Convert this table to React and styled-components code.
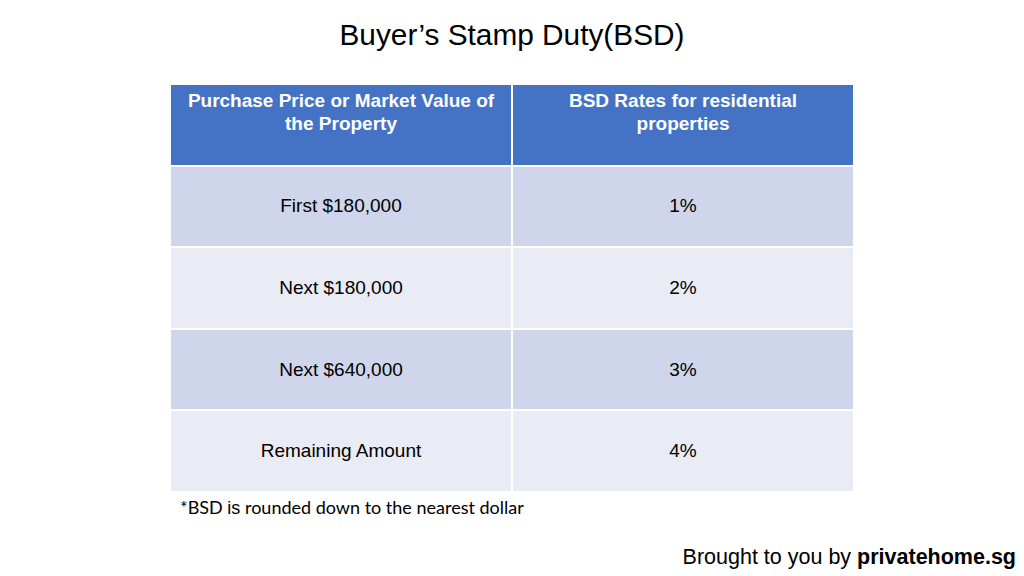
import React from "react";
import styled, { createGlobalStyle } from "styled-components";

const Global = createGlobalStyle`
  html, body { margin: 0; padding: 0; background: #ffffff; }
  body { font-family: "Liberation Sans", Arial, sans-serif; color: #000; }
`;

const Slide = styled.div`
  width: 1024px;
  height: 576px;
  display: flex;
  flex-direction: column;
  box-sizing: border-box;
  overflow: hidden;
`;

const Title = styled.h1`
  margin: 16px 0 0 0;
  font-size: 29.8px;
  line-height: 38px;
  font-weight: 400;
  text-align: center;
`;

const Table = styled.div`
  margin: 31px 0 0 171px;
  width: 682px;
  height: 406px;
  display: grid;
  grid-template-columns: 340px 340px;
  grid-template-rows: repeat(5, 1fr);
  column-gap: 2px;
  row-gap: 2px;
  background: #ffffff;
`;

const HeadCell = styled.div`
  background: #4472c4;
  color: #ffffff;
  font-weight: 700;
  font-size: 19px;
  line-height: 23px;
  text-align: center;
  padding: 4px ${(p) => p.$pad}px 0;
`;

const Cell = styled.div`
  background: ${(p) => (p.$odd ? "#cfd5ea" : "#e9ebf5")};
  font-size: 19px;
  display: flex;
  align-items: center;
  justify-content: center;
`;

const Note = styled.p`
  margin: 5px 0 0 180px;
  font-family: "Lato", "Noto Sans", sans-serif;
  font-size: 18px;
  line-height: 22px;
`;

const Is = styled.span`
  font-family: "Liberation Sans", Arial, sans-serif;
`;

const Credit = styled.p`
  margin: auto 8px 6px 0;
  align-self: flex-end;
  font-size: 21.5px;
  line-height: 26px;
`;

const rows = [
  ["First $180,000", "1%"],
  ["Next $180,000", "2%"],
  ["Next $640,000", "3%"],
  ["Remaining Amount", "4%"],
];

export default function App() {
  return (
    <>
      <Global />
      <Slide>
        <Title>Buyer’s Stamp Duty(BSD)</Title>
        <Table>
          <HeadCell $pad={6}>Purchase Price or Market Value of the Property</HeadCell>
          <HeadCell $pad={20}>BSD Rates for residential properties</HeadCell>
          {rows.map(([a, b], i) => (
            <React.Fragment key={a}>
              <Cell $odd={i % 2 === 0}>{a}</Cell>
              <Cell $odd={i % 2 === 0}>{b}</Cell>
            </React.Fragment>
          ))}
        </Table>
        <Note>
          *BSD <Is>is</Is> rounded down to the nearest dollar
        </Note>
        <Credit>
          Brought to you by <b>privatehome.sg</b>
        </Credit>
      </Slide>
    </>
  );
}
